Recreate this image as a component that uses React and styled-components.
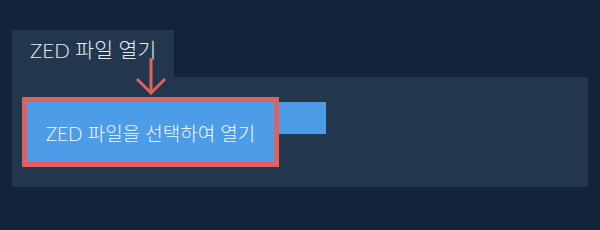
import React from "react";
import styled, { createGlobalStyle } from "styled-components";

const Global = createGlobalStyle`
  html, body {
    margin: 0;
    padding: 0;
    background: #12243a;
  }
  body {
    font-family: Lato, "Noto Sans CJK KR", sans-serif;
  }
`;

const Page = styled.div`
  width: 600px;
  height: 230px;
  box-sizing: border-box;
  padding: 30px 12px 0 12px;
  display: flex;
  flex-direction: column;
  position: relative;
`;

const Tab = styled.div`
  align-self: flex-start;
  width: 162px;
  height: 47px;
  box-sizing: border-box;
  padding: 8px 0 0 18px;
  background: #22374e;
  color: #e8edf2;
  font-size: 20.5px;
  font-weight: 300;
  line-height: 25px;
  white-space: nowrap;
`;

const Panel = styled.div`
  height: 110px;
  box-sizing: border-box;
  padding: 20px 10px;
  background: #22374e;
  display: flex;
  align-items: flex-start;
`;

const OpenButton = styled.div`
  width: 257px;
  height: 70px;
  box-sizing: border-box;
  border: 5px solid #e0605b;
  background: #4c9ce8;
  color: #f5f8fc;
  font-size: 19px;
  font-weight: 300;
  display: flex;
  align-items: center;
  justify-content: center;
  white-space: nowrap;
`;

const Strip = styled.div`
  width: 47px;
  height: 32px;
  margin-top: 5px;
  background: #4c9ce8;
`;

const Arrow = styled.svg`
  position: absolute;
  left: 134px;
  top: 57px;
`;

export default function App() {
  return (
    <>
      <Global />
      <Page>
        <Tab>ZED 파일 열기</Tab>
        <Panel>
          <OpenButton>ZED 파일을 선택하여 열기</OpenButton>
          <Strip />
        </Panel>
        <Arrow width="34" height="40" viewBox="0 0 34 40">
          <g fill="none" stroke="#e0605b" strokeWidth="3" strokeLinecap="butt">
            <line x1="17" y1="1" x2="17" y2="35" />
            <polyline points="3,22 17,36 31,22" />
          </g>
        </Arrow>
      </Page>
    </>
  );
}
